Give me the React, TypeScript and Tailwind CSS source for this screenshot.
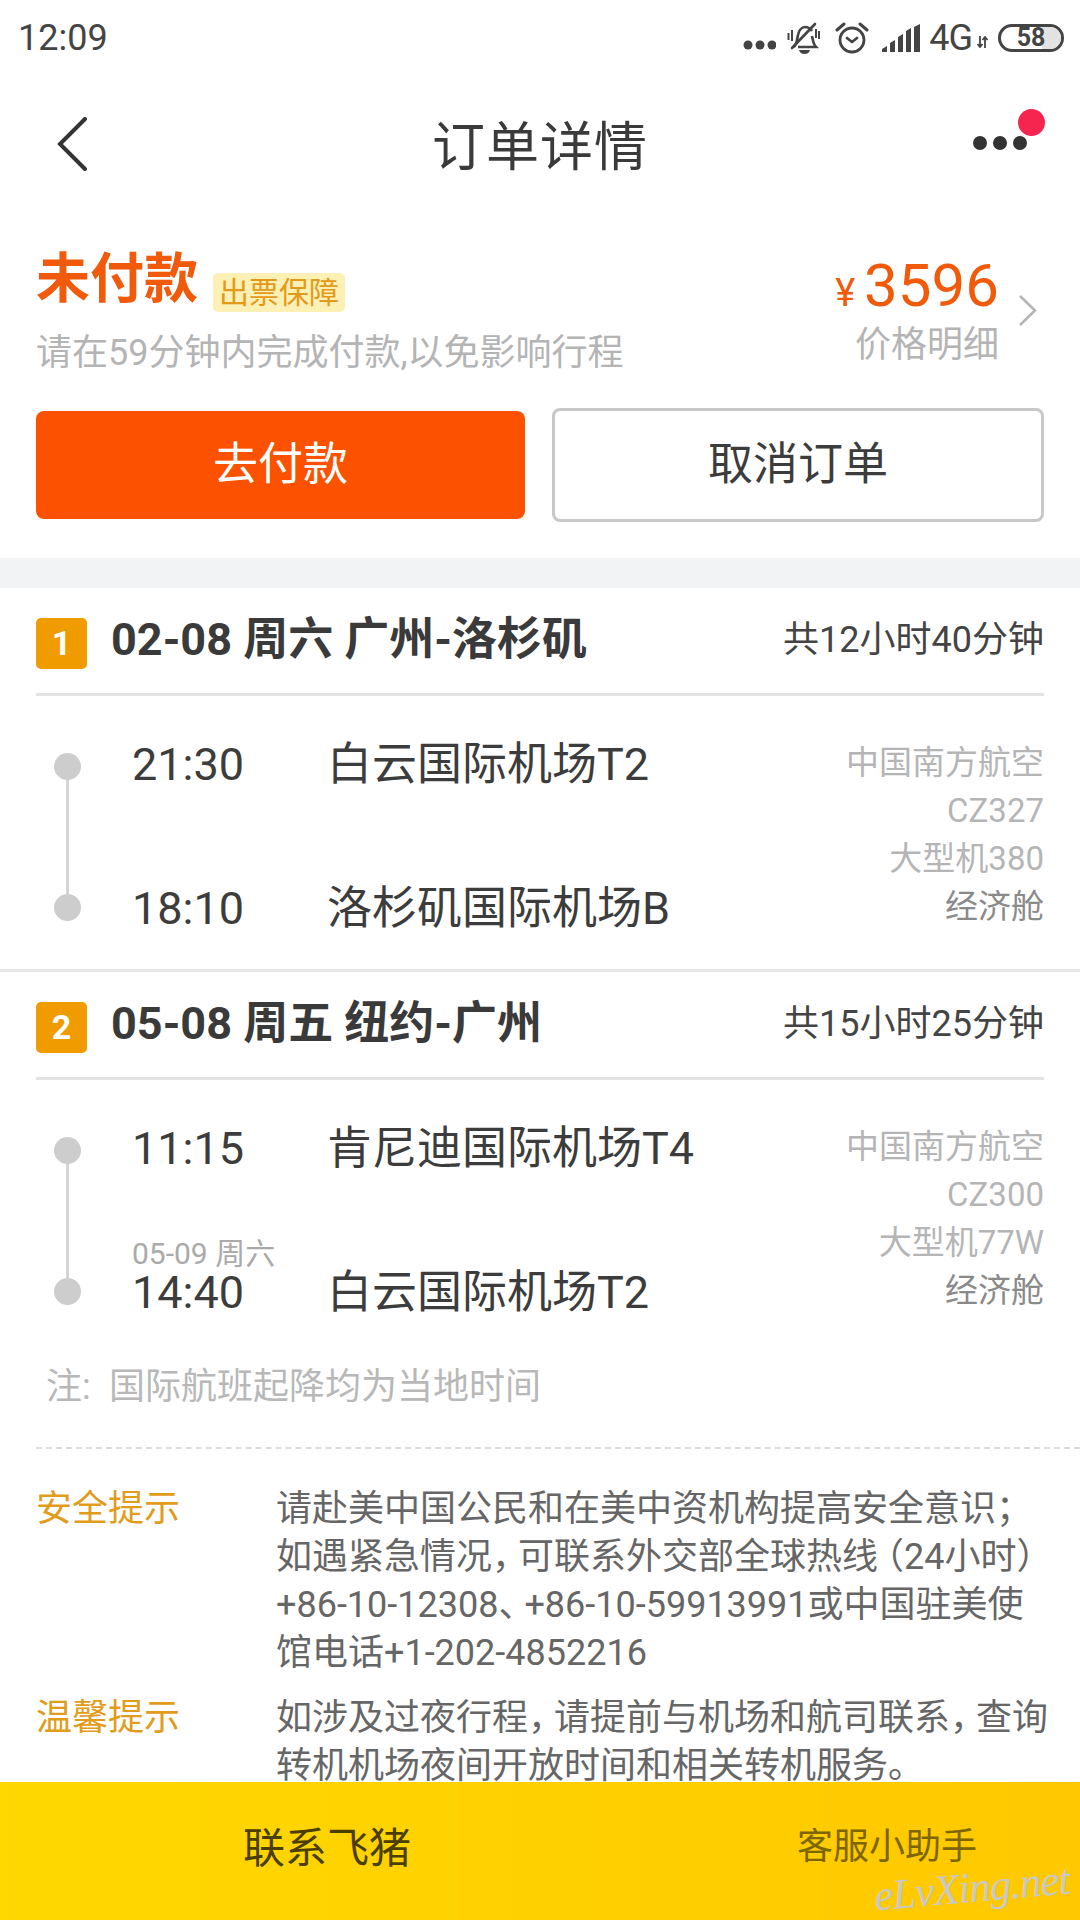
import React from "react";

function Punct({ text }: { text: string }) {
  const parts = text.split(/([，、（）])/);
  return (
    <>
      {parts.map((p, i) => {
        if (p === "，" || p === "、") return <span key={i} className="tracking-[-10px]">{p}</span>;
        if (p === "（") return <span key={i} className="-ml-[10px]">{p}</span>;
        if (p === "）") return <span key={i} className="tracking-[-10px]">{p}</span>;
        return <span key={i}>{p}</span>;
      })}
    </>
  );
}

function StatusIcons() {
  return (
    <div className="flex items-center h-[40px] text-[#444]">
      <svg width="33" height="12" viewBox="0 0 33 12" className="mt-[14px]">
        <circle cx="5" cy="6" r="4.500" fill="#444" />
        <circle cx="17" cy="6" r="4.500" fill="#444" />
        <circle cx="29" cy="6" r="4.500" fill="#444" />
      </svg>
      <svg width="34" height="32" viewBox="0 0 34 32" className="ml-[11px]" fill="none" stroke="#444" strokeWidth="2.600">
        <path d="M7 25c3-3 3-8 4-12 1-5 4-8 7-8s5 1 7 4M25 14c1 4 1 8 4 11H11" />
        <path d="M5 26 28 2" strokeLinecap="round" />
        <path d="M12 28h11c-1 3-3 4-5.500 4S13 31 12 28z" fill="#444" stroke="none" />
        <path d="M1.500 11v7M5 8v11M32 9v8M29 7v9" strokeWidth="2" />
      </svg>
      <svg width="34" height="33" viewBox="0 0 34 33" className="ml-[14px]" fill="none" stroke="#444" strokeWidth="2.800">
        <circle cx="17" cy="19" r="12" />
        <path d="M12 17l5 4 5-4" strokeLinecap="round" strokeLinejoin="round" />
        <path d="M2 9l7-6M32 9l-7-6" strokeLinecap="round" strokeWidth="3" />
      </svg>
      <svg width="40" height="28" viewBox="0 0 40 28" className="ml-[13px]" fill="#444">
        <path d="M0 28v-3l5-3v6zM8 28v-9l5-3v12zM16 28V13l5-3v18zM24 28V7l5-3v24zM32 28V3l6-3v28z" />
      </svg>
      <span className="ml-[7px] text-[36px] leading-[40px] tracking-[-1px] font-['Roboto',sans-serif]">4G</span>
      <svg width="11" height="12" viewBox="0 0 11 12" className="ml-[5px] mt-[9px]" fill="none" stroke="#444" strokeWidth="1.800">
        <path d="M3 0v11M0.500 8 3 11l2.500-3M8 12V1M5.500 4 8 1l2.500 3" />
      </svg>
      <div className="relative ml-[10px] w-[66px] h-[28px] rounded-[14px] border-[3px] border-[#444] overflow-hidden flex items-center justify-center">
        <div className="absolute right-0 top-0 bottom-0 w-[19px] bg-[#e2e2e2]" />
        <span className="relative text-[25px] leading-[22px] font-bold font-['Roboto',sans-serif]">58</span>
      </div>
    </div>
  );
}

function Segment({
  num, title, total, t1, a1, t2, a2, sub, info, border,
}: {
  num: string; title: string; total: string; t1: string; a1: string; t2: string; a2: string;
  sub?: string; info: string[]; border?: boolean;
}) {
  return (
    <div className={border ? "h-[384px] border-b-[3px] border-[#e6e6e6]" : ""}>
      <div className="mx-[36px] h-[108px] border-b-[3px] border-[#e3e3e3] flex items-start pt-[27px]">
        <div className="mt-[3px] w-[51px] h-[51px] rounded-[5px] bg-[#f09c00] text-white text-[34px] font-bold leading-[51px] text-center">{num}</div>
        <div className="ml-[24px] text-[45px] font-bold leading-[50px] text-[#3a3a3a] whitespace-nowrap">{title}</div>
        <div className="ml-auto text-[36px] leading-[50px] text-[#444] whitespace-nowrap">{total}</div>
      </div>
      <div className="flex pt-[44px] pl-[54px] pr-[36px]">
        <div className="mt-[13px] h-[168px] w-[27px] flex flex-col items-center shrink-0">
          <div className="w-[27px] h-[27px] rounded-full bg-[#cdcdcd] shrink-0" />
          <div className="w-[3px] flex-1 bg-[#d4d4d4]" />
          <div className="w-[27px] h-[27px] rounded-full bg-[#cdcdcd] shrink-0" />
        </div>
        <div className="ml-[51px] mt-[1px] w-[195px] h-[192px] flex flex-col justify-between text-[45px] leading-[48px] text-[#3c3c3c] shrink-0">
          <div>{t1}</div>
          <div>
            {sub && <div className="text-[30px] leading-[30px] text-[#aaa]">{sub}</div>}
            <div>{t2}</div>
          </div>
        </div>
        <div className="mt-[1px] h-[192px] flex flex-col justify-between text-[45px] leading-[48px] text-[#3c3c3c] whitespace-nowrap">
          <div>{a1}</div>
          <div>{a2}</div>
        </div>
        <div className="ml-auto -mt-[1px] text-right text-[33px] leading-[48px] text-[#b5b5b5] whitespace-nowrap">
          {info.map((l) => <div key={l}>{l}</div>)}
          <div className="text-[#8a8a8a]">经济舱</div>
        </div>
      </div>
    </div>
  );
}

function Tip({ label, lines }: { label: string; lines: string[] }) {
  return (
    <div className="flex pl-[36px]">
      <div className="w-[240px] text-[36px] leading-[48px] text-[#e19c1c] shrink-0">{label}</div>
      <div className="text-[36px] leading-[48px] text-[#666] whitespace-nowrap">
        {lines.map((l) => <div key={l}><Punct text={l} /></div>)}
      </div>
    </div>
  );
}

export default function App() {
  return (
    <div className="w-[1080px] h-[1920px] flex flex-col overflow-hidden bg-white font-['Roboto','Noto_Sans_CJK_SC',sans-serif]">
      <div className="flex-1 min-h-0 overflow-hidden">
        <div className="h-[75px] pl-[18px] pr-[16px] flex items-center justify-between">
          <span className="text-[36px] leading-[40px] text-[#444]">12:09</span>
          <StatusIcons />
        </div>
        <div className="relative h-[142px] flex items-center justify-center">
          <svg width="32" height="54" viewBox="0 0 32 54" className="absolute left-[56px] top-[42px]" fill="none" stroke="#333" strokeWidth="4" strokeLinecap="round">
            <path d="M29 2 4 27l25 25" />
          </svg>
          <span className="mt-[4px] text-[53px] tracking-[1px] leading-[60px] text-[#3a3a3a]">订单详情</span>
          <div className="absolute left-[973px] top-[61px] flex gap-[6px]">
            <div className="w-[14px] h-[14px] rounded-full bg-[#333]" />
            <div className="w-[14px] h-[14px] rounded-full bg-[#333]" />
            <div className="w-[14px] h-[14px] rounded-full bg-[#333]" />
          </div>
          <div className="absolute left-[1018px] top-[34px] w-[27px] h-[27px] rounded-full bg-[#f5254f]" />
        </div>

        <div className="pt-[36px] pb-[36px] px-[36px]">
          <div className="flex h-[124px]">
            <div>
              <div className="flex h-[50px]">
                <span className="mt-[2px] text-[54px] leading-[50px] font-bold text-[#f05a0a]">未付款</span>
                <span className="ml-[15px] mt-[20px] w-[132px] h-[39px] rounded-[5px] bg-[#fdf0b4] text-[#e39a1a] text-[30px] leading-[39px] text-center whitespace-nowrap">出票保障</span>
              </div>
              <div className="mt-[26px] text-[36px] leading-[48px] text-[#b4b4b4] whitespace-nowrap">请在59分钟内完成付款,以免影响行程</div>
            </div>
            <div className="ml-auto flex items-start">
              <div className="flex flex-col items-end">
                <div className="mt-[3px] h-[60px] flex items-end text-[#f05a0a]">
                  <span className="text-[38px] leading-[46px] mr-[9px]">¥</span>
                  <span className="text-[60px] leading-[60px]">3596</span>
                </div>
                <div className="mt-[7px] text-[36px] leading-[44px] text-[#b4b4b4]">价格明细</div>
              </div>
              <svg width="20" height="33" viewBox="0 0 20 33" className="ml-[19px] mt-[41px] mr-[6px]" fill="none" stroke="#b4b4b4" strokeWidth="2.500">
                <path d="M2 2l15 14.500L2 31" />
              </svg>
            </div>
          </div>
          <div className="mt-[31px] flex gap-[27px] items-center">
            <div className="w-[489px] h-[108px] rounded-[8px] bg-[#fc5200] text-white text-[45px] leading-[108px] text-center">去付款</div>
            <div className="w-[492px] h-[114px] rounded-[8px] border-[3px] border-[#c8c8c8] text-[#3c3c3c] text-[45px] leading-[108px] text-center">取消订单</div>
          </div>
        </div>

        <div className="h-[30px] bg-[#f2f3f5]" />

        <Segment border num="1" title="02-08 周六 广州-洛杉矶" total="共12小时40分钟" t1="21:30" a1="白云国际机场T2" t2="18:10" a2="洛杉矶国际机场B" info={["中国南方航空", "CZ327", "大型机380"]} />
        <Segment num="2" title="05-08 周五 纽约-广州" total="共15小时25分钟" t1="11:15" a1="肯尼迪国际机场T4" t2="14:40" a2="白云国际机场T2" sub="05-09 周六" info={["中国南方航空", "CZ300", "大型机77W"]} />

        <div className="mt-[46px] pl-[46px] flex text-[36px] leading-[48px] text-[#b8b8b8]">
          <span className="w-[63px]">注:</span>
          <span>国际航班起降均为当地时间</span>
        </div>
        <div className="mt-[36px] ml-[36px] border-t-2 border-dashed border-[#dcdcdc]" />
        <div className="mt-[36px] flex flex-col gap-[17px]">
          <Tip label="安全提示" lines={["请赴美中国公民和在美中资机构提高安全意识；", "如遇紧急情况，可联系外交部全球热线（24小时）", "+86-10-12308、+86-10-59913991或中国驻美使", "馆电话+1-202-4852216"]} />
          <Tip label="温馨提示" lines={["如涉及过夜行程，请提前与机场和航司联系，查询", "转机机场夜间开放时间和相关转机服务。"]} />
        </div>
      </div>

      <div className="relative h-[138px] shrink-0 flex bg-linear-to-r from-[#ffd800] to-[#ffc800]">
        <div className="w-[654px] flex items-center justify-center pb-[6px] text-[42px] text-[#4a3f00]">联系飞猪</div>
        <div className="flex-1 flex items-center justify-center pl-[40px] pb-[8px] text-[36px] text-[#7d6500]">客服小助手</div>
        <div className="absolute left-[874px] top-[84px] -rotate-[5deg] text-[43px] leading-[44px] italic text-[#c8c8c8] font-['Liberation_Serif',serif] tracking-[-1px] whitespace-nowrap">eLvXing.net</div>
      </div>
    </div>
  );
}
